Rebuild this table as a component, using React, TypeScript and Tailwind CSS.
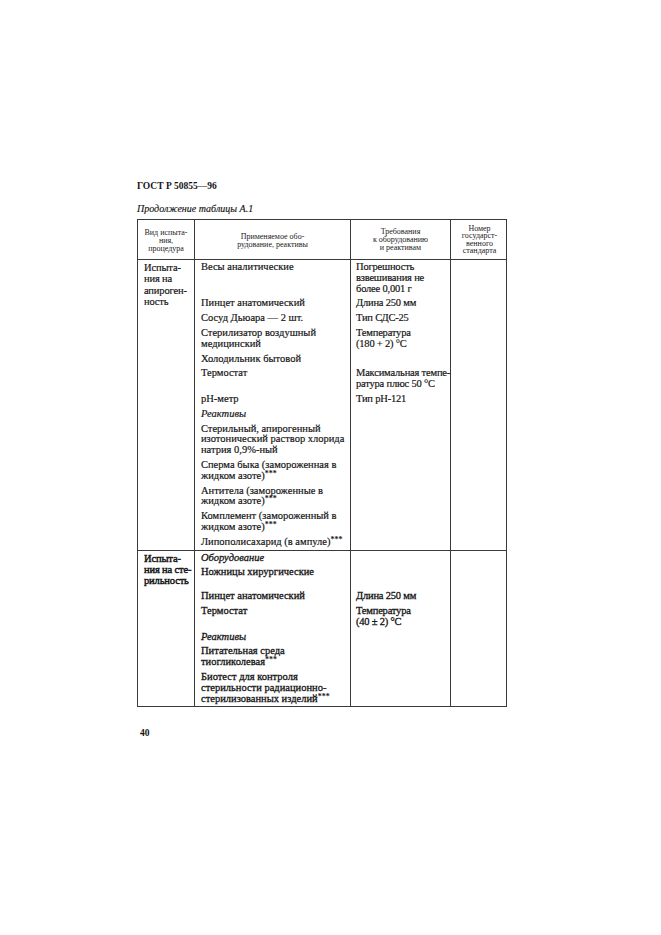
import React from 'react';

type Item = {
  left: string[];
  right?: string[];
  italic?: boolean;
  extra?: string;
};

const Stars = () => (
  <span className="relative -top-[3px] text-[8px] font-bold leading-none [-webkit-text-stroke:0px]">***</span>
);

// "***" at the end of a line is drawn raised
const Line: React.FC<{ text: string }> = ({ text }) => {
  if (text.endsWith('***')) {
    return (
      <div className="whitespace-nowrap">
        {text.slice(0, -3)}
        <Stars />
      </div>
    );
  }
  return <div className="whitespace-nowrap">{text}</div>;
};

const apyrogenItems: Item[] = [
  { left: ['Весы аналитические'], right: ['Погрешность', 'взвешивания не', 'более 0,001 г'] },
  { left: ['Пинцет анатомический'], right: ['Длина 250 мм'] },
  { left: ['Сосуд Дьюара — 2 шт.'], right: ['Тип СДС-25'] },
  { left: ['Стерилизатор воздушный', 'медицинский'], right: ['Температура', '(180 + 2) °С'] },
  { left: ['Холодильник бытовой'] },
  { left: ['Термостат'], right: ['Максимальная темпе-', 'ратура плюс 50 °С'] },
  { left: ['рН-метр'], right: ['Тип рН-121'] },
  { left: ['Реактивы'], italic: true },
  { left: ['Стерильный, апирогенный', 'изотонический раствор хлорида', 'натрия 0,9%-ный'] },
  { left: ['Сперма быка (замороженная в', 'жидком азоте)***'] },
  { left: ['Антитела (замороженные в', 'жидком азоте)***'] },
  { left: ['Комплемент (замороженный в', 'жидком азоте)***'] },
  { left: ['Липополисахарид (в ампуле)***'] },
];

const sterilityItems: Item[] = [
  { left: ['Оборудование'], italic: true },
  { left: ['Ножницы хирургические'], extra: 'pb-[11px]' },
  { left: ['Пинцет анатомический'], right: ['Длина 250 мм'] },
  { left: ['Термостат'], right: ['Температура', '(40 ± 2) °С'], extra: 'pb-[3px]' },
  { left: ['Реактивы'], italic: true },
  { left: ['Питательная среда', 'тиогликолевая***'] },
  { left: ['Биотест для контроля', 'стерильности радиационно-', 'стерилизованных изделий***'] },
];

const TableRow: React.FC<{ test: string[]; items: Item[]; last?: boolean; heavy?: boolean }> = ({
  test,
  items,
  last,
  heavy,
}) => (
  <div
    className={`grid grid-cols-[57px_256px_56px] ${last ? '' : 'border-b border-[#3a3a3a]'} ${
      heavy ? '[-webkit-text-stroke:0.3px_#141414]' : ''
    }`}
  >
    <div
      className={`border-r border-[#3a3a3a] pl-[6px] pt-[2px] leading-[11.3px] tracking-[-0.15px] ${
        heavy ? '[-webkit-text-stroke:0.45px_#141414]' : ''
      }`}
    >
      {test.map((t) => (
        <div key={t} className="whitespace-nowrap">{t}</div>
      ))}
    </div>
    <div className="flex flex-col">
      {items.map((it, i) => (
        <div key={i} className="grid grid-cols-[156px_100px]">
          <div
            className={`border-r border-[#3a3a3a] pl-[6px] pt-[2px] pb-[2px] ${it.extra ?? ''} ${
              it.italic ? 'italic' : ''
            }`}
          >
            {it.left.map((l) => (
              <Line key={l} text={l} />
            ))}
          </div>
          <div className="border-r border-[#3a3a3a] pl-[5px] pt-[2px] pb-[2px] tracking-[-0.2px]">
            {(it.right ?? []).map((r) => (
              <Line key={r} text={r} />
            ))}
          </div>
        </div>
      ))}
      <div className="grid grid-cols-[156px_100px] flex-1">
        <div className="border-r border-[#3a3a3a]" />
        <div className="border-r border-[#3a3a3a]" />
      </div>
    </div>
    <div />
  </div>
);

export default function App() {
  return (
    <div className="w-[661px] h-[935px] bg-white pl-[137px] pt-[179px] font-['Liberation_Serif',serif] text-[#141414]">
      <div className="text-[9.5px] font-bold leading-[14px]">ГОСТ Р 50855—96</div>
      <div className="mt-[9px] text-[10px] italic leading-[13px] [-webkit-text-stroke:0.15px_#141414]">
        Продолжение таблицы А.1
      </div>

      <div className="mt-[4px] w-[370px] border border-[#3a3a3a] text-[10.5px] leading-[10.8px] [-webkit-text-stroke:0.18px_#141414]">
        {/* header */}
        <div className="grid grid-cols-[57px_156px_100px_57px] h-[40px] border-b border-[#3a3a3a] text-[8px] leading-[8px] text-[#222] [-webkit-text-stroke:0px]">
          <div className="border-r border-[#3a3a3a] flex flex-col items-center justify-center pt-[3px]">
            <div>Вид испыта-</div>
            <div>ния,</div>
            <div>процедура</div>
          </div>
          <div className="border-r border-[#3a3a3a] flex flex-col items-center justify-center pt-[3px]">
            <div>Применяемое обо-</div>
            <div>рудование, реактивы</div>
          </div>
          <div className="border-r border-[#3a3a3a] flex flex-col items-center justify-center">
            <div>Требования</div>
            <div>к оборудованию</div>
            <div>и реактивам</div>
          </div>
          <div className="flex flex-col items-center justify-center leading-[7.5px]">
            <div>Номер</div>
            <div>государст-</div>
            <div>венного</div>
            <div>стандарта</div>
          </div>
        </div>

        <TableRow test={['Испыта-', 'ния на', 'апироген-', 'ность']} items={apyrogenItems} />
        <TableRow test={['Испыта-', 'ния на сте-', 'рильность']} items={sterilityItems} last heavy />
      </div>

      <div className="mt-[20px] pl-[3px] text-[9.5px] font-bold leading-[12px]">40</div>
    </div>
  );
}
